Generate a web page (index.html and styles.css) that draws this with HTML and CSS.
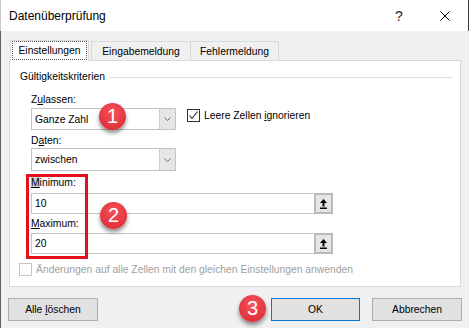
FILE: index.html
```html
<!DOCTYPE html>
<html lang="de">
<head>
    <meta charset="UTF-8">
    <title>Datenüberprüfung</title>
    <link rel="stylesheet" href="styles.css">
</head>
<body>
    <div class="dialog">
        <div class="titlebar">
            <span class="title">Datenüberprüfung</span>
            <span class="help">?</span>
            <span class="close">
                <svg width="10" height="10" viewBox="0 0 10 10"><path d="M0.5 0.5 L9.5 9.5 M9.5 0.5 L0.5 9.5" stroke="#000" stroke-width="1" fill="none"/></svg>
            </span>
        </div>

        <div class="main">
            <div class="tabs">
                <div class="tab active"><span class="focus">Einstellungen</span></div>
                <div class="tab tab-input">Eingabemeldung</div>
                <div class="tab tab-error">Fehlermeldung</div>
            </div>

            <div class="panel">
                <div class="group-title">
                    <span>Gültigkeitskriterien</span>
                    <span class="rule"></span>
                </div>

                <div class="group">
                    <div class="field-label label-allow">Z<u>u</u>lassen:</div>
                    <div class="row">
                        <div class="combo">
                            <span class="combo-text">Ganze Zahl</span>
                            <span class="drop">
                                <svg width="7" height="4" viewBox="0 0 7 4"><path d="M0.5 0.5 L3.5 3.5 L6.5 0.5" stroke="#6b6b6b" fill="none"/></svg>
                            </span>
                        </div>
                        <div class="check">
                            <span class="box">
                                <svg width="11" height="11" viewBox="0 0 11 11"><path d="M1.5 5.5 L4 8.5 L9.5 1.5" stroke="#222" stroke-width="1.1" fill="none"/></svg>
                            </span>
                            <span>Leere Zellen <u>i</u>gnorieren</span>
                        </div>
                    </div>

                    <div class="field-label label-data">D<u>a</u>ten:</div>
                    <div class="combo combo-tall">
                        <span class="combo-text">zwischen</span>
                        <span class="drop">
                            <svg width="7" height="4" viewBox="0 0 7 4"><path d="M0.5 0.5 L3.5 3.5 L6.5 0.5" stroke="#6b6b6b" fill="none"/></svg>
                        </span>
                    </div>

                    <div class="field-label label-min"><u class="mark">M</u>inimum:</div>
                    <div class="ref-input input-min">
                        <span class="input-text">10</span>
                        <span class="pick">
                            <svg width="7" height="10" viewBox="0 0 7 10"><path d="M3.5 0 L7 4 L0 4 Z" fill="#000"/><rect x="2.5" y="3.5" width="2" height="4" fill="#000"/><rect x="0" y="8.5" width="7" height="1.5" fill="#000"/></svg>
                        </span>
                    </div>

                    <div class="field-label label-max"><u>M</u>aximum:</div>
                    <div class="ref-input input-max">
                        <span class="input-text">20</span>
                        <span class="pick">
                            <svg width="7" height="10" viewBox="0 0 7 10"><path d="M3.5 0 L7 4 L0 4 Z" fill="#000"/><rect x="2.5" y="3.5" width="2" height="4" fill="#000"/><rect x="0" y="8.5" width="7" height="1.5" fill="#000"/></svg>
                        </span>
                    </div>
                </div>

                <div class="check disabled">
                    <span class="box"></span>
                    <span>Änderungen auf alle Zellen mit den gleichen Einstellungen anwenden</span>
                </div>
            </div>

            <div class="buttons">
                <div class="button clear"><span>Alle <u>l</u>öschen</span></div>
                <div class="button ok"><span>OK</span></div>
                <div class="button cancel"><span>Abbrechen</span></div>
            </div>
        </div>

        <div class="highlight"></div>
        <div class="badge badge-1">1</div>
        <div class="badge badge-2">2</div>
        <div class="badge badge-3">3</div>
    </div>
</body>
</html>
```

FILE: styles.css
```css
body {
    margin: 0;
    font-family: 'Liberation Sans', Arial, sans-serif;
    font-size: 10.33px;
    color: #000;
    background: #f0f0f0;
}
u {
    text-decoration: underline;
    text-underline-offset: 1px;
}
.dialog {
    position: relative;
    width: 469px;
    height: 328px;
    overflow: hidden;
    background: #f0f0f0;
}
.titlebar {
    height: 31px;
    box-sizing: border-box;
    display: flex;
    align-items: center;
    background: #fff;
    border-left: 1px solid #c8c8c8;
    border-right: 1px solid #3a3a3a;
    padding-left: 8px;
}
.title {
    font-size: 12px;
    flex: 1;
}
.help {
    width: 46px;
    text-align: center;
    font-size: 14px;
    color: #222;
}
.close {
    width: 46px;
    display: flex;
    justify-content: center;
}
.main {
    height: 297px;
    box-sizing: border-box;
    border-left: 1px solid #5e6268;
    padding: 9px 7px 0 8px;
}
.tabs {
    display: flex;
    align-items: flex-end;
    height: 20px;
    padding-left: 1px;
}
.tab {
    height: 19px;
    box-sizing: border-box;
    border: 1px solid #d9d9d9;
    border-bottom: none;
    background: #f0f0f0;
    display: flex;
    align-items: center;
    justify-content: center;
}
.tab.active {
    width: 79px;
    height: 21px;
    margin-bottom: -1px;
    background: #fff;
    position: relative;
    z-index: 1;
    align-items: stretch;
    padding: 0 1px 1px 1px;
}
.focus {
    flex: 1;
    display: flex;
    align-items: center;
    justify-content: center;
    border: 1px dotted #555;
}
.tab-input {
    width: 100px;
    margin-left: 2px;
}
.tab-error {
    width: 89px;
    margin-left: -1px;
}
.panel {
    width: 452px;
    height: 227px;
    box-sizing: border-box;
    border: 1px solid #d9d9d9;
    background: #fff;
}
.group-title {
    display: flex;
    align-items: center;
    line-height: 14px;
    margin-top: 9px;
    padding: 0 8px 0 10px;
}
.rule {
    flex: 1;
    height: 1px;
    background: #dcdcdc;
    margin-left: 5px;
}
.group {
    padding-left: 21px;
}
.field-label {
    line-height: 14px;
}
.label-allow { margin-top: 9px; }
.label-data { margin-top: 4px; }
.label-min { margin-top: 5px; }
.label-max { margin-top: 3px; }
.mark {
    background: #d0d0d0;
}
.row {
    display: flex;
    margin-top: 1px;
}
.combo {
    width: 145px;
    height: 22px;
    box-sizing: border-box;
    border: 1px solid #c3c3c3;
    display: flex;
    background: #fff;
}
.combo-tall {
    height: 23px;
}
.combo-text {
    flex: 1;
    display: flex;
    align-items: center;
    padding-left: 3px;
}
.drop {
    width: 15px;
    background: #e6e6e6;
    border-left: 1px solid #cdcdcd;
    display: flex;
    align-items: center;
    justify-content: center;
}
.check {
    display: flex;
    align-items: center;
    gap: 4px;
}
.row .check {
    margin-left: 11px;
    margin-top: 1px;
    align-self: flex-start;
    height: 13px;
}
.box {
    width: 13px;
    height: 13px;
    box-sizing: border-box;
    border: 1px solid #333;
    background: #fff;
    display: flex;
    align-items: center;
    justify-content: center;
}
.check.disabled {
    margin-top: 9px;
    padding-left: 9px;
    height: 13px;
    color: #a0a0a0;
}
.check.disabled .box {
    border-color: #c4c4c4;
}
.ref-input {
    width: 302px;
    height: 21px;
    box-sizing: border-box;
    border: 1px solid #c6c6c6;
    display: flex;
}
.input-min { margin-top: 3px; }
.input-max { margin-top: 2px; }
.input-text {
    flex: 1;
    display: flex;
    align-items: center;
    padding-left: 3px;
}
.pick {
    width: 19px;
    margin: -1px -1px -1px 0;
    box-sizing: border-box;
    border: 2px solid #bababa;
    background: #e6e6e6;
    display: flex;
    align-items: center;
    justify-content: center;
}
.buttons {
    display: flex;
    margin-top: 11px;
}
.button {
    height: 23px;
    box-sizing: border-box;
    border: 1px solid #adadad;
    background: #e1e1e1;
    display: flex;
    align-items: center;
    justify-content: center;
}
.clear {
    width: 90px;
    margin-left: -1px;
}
.ok {
    width: 89px;
    margin-left: auto;
    border-color: #0078d7;
}
.cancel {
    width: 90px;
    margin-left: 12px;
}
.highlight {
    position: absolute;
    left: 26px;
    top: 174px;
    width: 62px;
    height: 85px;
    box-sizing: border-box;
    border: 3px solid #e3101b;
}
.badge {
    position: absolute;
    width: 27px;
    height: 27px;
    border-radius: 50%;
    background: radial-gradient(circle at 50% 35%, #f4535b, #dc2530);
    box-shadow: 0 3px 4px rgba(0,0,0,0.45);
    color: #fff;
    font-size: 20px;
    display: flex;
    align-items: center;
    justify-content: center;
}
.badge-1 { left: 99px; top: 103px; }
.badge-2 { left: 100px; top: 202px; }
.badge-3 { left: 239px; top: 295px; }
```
